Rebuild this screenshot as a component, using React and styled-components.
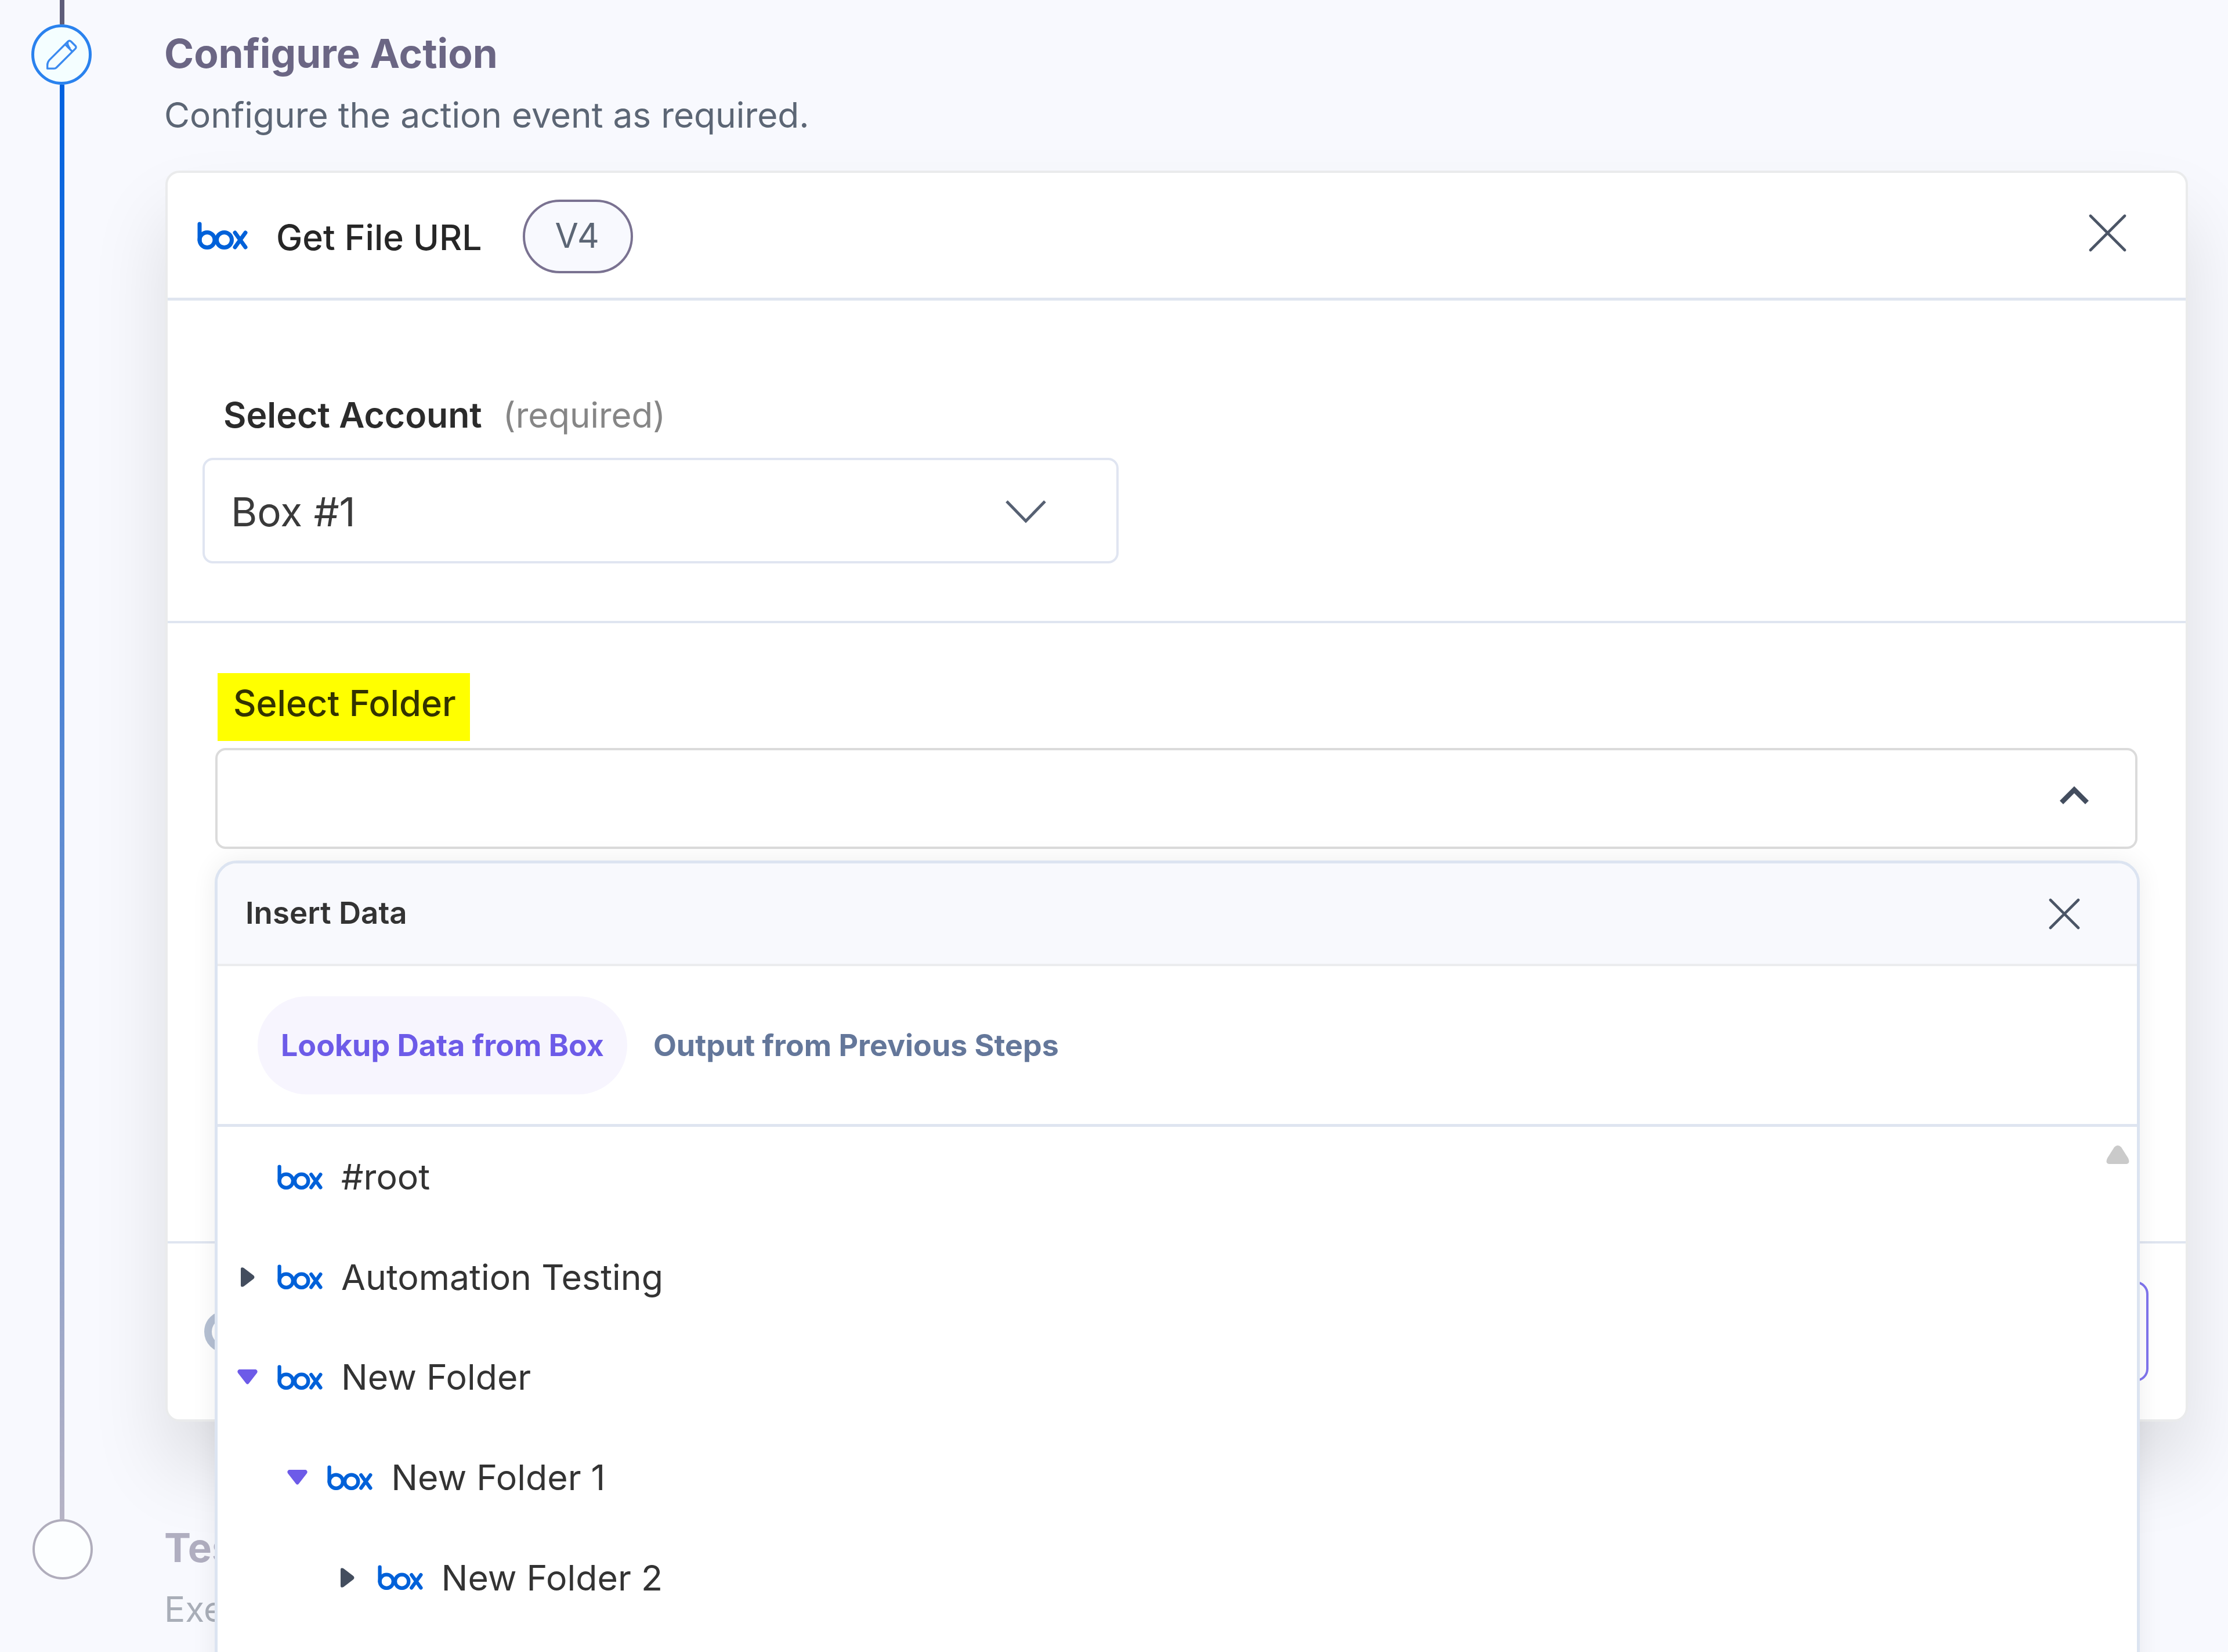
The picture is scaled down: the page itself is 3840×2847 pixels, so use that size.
import React, { useState } from 'react'
import styled, { createGlobalStyle, css } from 'styled-components'

const GlobalStyle = createGlobalStyle`
  * {
    box-sizing: border-box;
  }

  body {
    margin: 0;
    background: #f8f9fe;
    font-family: Inter, "Liberation Sans", sans-serif;
    color: #2b2b2b;
  }
`

const Page = styled.div`
  display: flex;
  align-items: flex-start;
  height: 2847px;
  overflow: hidden;
  background: #f8f9fe;
`

/* ---------- step rail ---------- */

const Rail = styled.div`
  display: flex;
  flex-direction: column;
  align-items: center;
  flex: none;
  width: 106px;
  margin: 0 125px 0 54px;
`

const RailLine = styled.div`
  width: 8px;
  height: ${props => props.$height}px;
  background: ${props => props.$fill};
`

const StepCircle = styled.div`
  display: flex;
  align-items: center;
  justify-content: center;
  width: 104px;
  height: 104px;
  border-radius: 50%;

  ${props => props.$active ? css`
    align-self: flex-start;
    border: 5px solid #2a82ee;
    background: #f4feff;
  ` : css`
    align-self: flex-end;
    border: 4px solid #b0adbc;
    background: #fcfeff;
  `}
`

/* ---------- step text ---------- */

const Steps = styled.div`
  width: 3486px;
  flex: none;
`

const StepHeader = styled.header`
  padding: ${props => props.$muted ? '177px 0 0' : '52px 0 60px'};
  opacity: ${props => props.$muted ? 0.5 : 1};
`

const StepTitle = styled.h2`
  margin: 0 0 30px -2px;
  font-size: 69.2px;
  line-height: 80px;
  font-weight: 700;
  color: #6b6684;
`

const StepText = styled.p`
  margin: 0 0 0 -2px;
  font-size: 60.4px;
  line-height: 72px;
  color: #5c6675;
`

/* ---------- card ---------- */

const Card = styled.section`
  border: 4px solid #eaebec;
  border-radius: 24px;
  background: #fff;
  box-shadow: 0 80px 130px rgba(0, 0, 0, 0.115);
`

const CardHeader = styled.div`
  display: flex;
  align-items: center;
  height: 220px;
  padding: 0 102px 0 51px;
  border-bottom: 5px solid #dfe5f0;
`

const CardTitle = styled.h3`
  margin: 6px 70px 0 49px;
  font-size: 60.7px;
  line-height: 74px;
  font-weight: 500;
  color: #262626;
`

const Version = styled.span`
  display: flex;
  align-items: center;
  justify-content: center;
  width: 190px;
  height: 127px;
  margin-top: 4px;
  padding: 0 2px 4px 0;
  border: 4px solid #7a7291;
  border-radius: 64px;
  background: #f8f9fe;
  font-size: 58.5px;
  color: #5c6675;
`

const IconButton = styled.button`
  display: flex;
  margin: ${props => props.$lift ? `-${props.$lift}px` : 0} 0 0 auto;
  padding: 0;
  border: 0;
  background: none;
  color: #4b5566;
`

const AccountSection = styled.div`
  height: 556px;
  padding: 160px 60px 0;
  border-bottom: 4px solid #dfe5f0;
`

const AccountLabel = styled.label`
  display: flex;
  gap: 36px;
  margin: 0 0 37px 36px;
  font-size: 60.7px;
  line-height: 74px;
  font-weight: 600;
  color: #2b2b2b;
`

const Required = styled.span`
  font-size: 60px;
  font-weight: 400;
  color: #868686;
`

const Select = styled.div`
  display: flex;
  align-items: center;
  justify-content: space-between;
  width: 1579px;
  height: 182px;
  padding: 3px 121px 0 45px;
  border: 4px solid #e0e5f1;
  border-radius: 18px;
  font-size: 69.3px;
  color: #3a3a3a;
`

const FolderSection = styled.div`
  height: 1069px;
  padding: 86px 83px 0 82px;
  border-bottom: 4px solid #dfe5f0;
`

const FolderLabel = styled.label`
  display: block;
  width: 435px;
  margin: 0 0 12px 4px;
  padding: 15px 0 28px 27px;
  background: #ff0;
  font-size: 61.3px;
  line-height: 74px;
  font-weight: 500;
  color: #333300;
  white-space: nowrap;
`

const FolderField = styled.div`
  position: relative;
`

const FolderInput = styled.div`
  display: flex;
  align-items: center;
  justify-content: flex-end;
  height: 174px;
  padding: 0 80px 10px 0;
  border: 4px solid #dbdbdb;
  border-radius: 18px;
  color: #434d5e;
`

const CardFooter = styled.div`
  display: flex;
  align-items: center;
  justify-content: space-between;
  height: 303px;
  padding: 0 64px 0 63px;
`

const FooterButton = styled.button`
  width: 460px;
  height: 173px;
  border: 4px solid #8175ee;
  border-radius: 22px;
  background: #fff;
`

/* ---------- insert data menu ---------- */

const Menu = styled.div`
  position: absolute;
  top: 194px;
  left: -1px;
  z-index: 2;
  width: 3318px;
  height: 1420px;
  border: 5px solid #dce4f1;
  border-radius: 38px 38px 0 0;
  background: #fff;
  box-shadow: 0 0 44px rgba(0, 0, 0, 0.07);
`

const MenuHeader = styled.div`
  display: flex;
  align-items: center;
  height: 177px;
  padding: 0 98px 0 48px;
  border-bottom: 4px solid #ebecee;
  border-radius: 33px 33px 0 0;
  background: #f8f9fd;
`

const MenuTitle = styled.span`
  margin-top: -3px;
  font-size: 52.8px;
  font-weight: 600;
  color: #333;
`

const Tabs = styled.div`
  display: flex;
  align-items: center;
  gap: 5px;
  height: 277px;
  padding: 0 69px;
  border-bottom: 5px solid #dfe5f0;
`

const Tab = styled.button`
  height: 169px;
  padding: 0 40px;
  border: 0;
  border-radius: 85px;
  background: ${props => props.$selected ? '#f7f5fe' : 'none'};
  color: ${props => props.$selected ? '#6d5be8' : '#64779a'};
  font-family: inherit;
  font-size: 51.9px;
  font-weight: 700;
  white-space: nowrap;
`

const Tree = styled.div`
  position: relative;
`

const ScrollArrow = styled.svg`
  position: absolute;
  top: 32px;
  right: 13px;
`

const TreeRow = styled.div`
  display: flex;
  align-items: center;
  height: 172.6px;
  padding-left: ${props => 34 + props.$level * 86.3}px;
  font-size: 60.8px;
  color: #333;
`

const Caret = styled.span`
  display: flex;
  justify-content: center;
  width: 35px;
  margin-right: 34px;
  color: ${props => props.$open ? '#6d5be8' : '#434d5e'};
`

const TreeLabel = styled.span`
  margin-left: 32px;
`

function BoxLogo({ width }) {
  return (
    <svg width={width} viewBox="0 0 87 48" fill="none" stroke="#0061d9" strokeWidth="7" strokeLinecap="round">
      <path d="M4 4V32" />
      <circle cx="17" cy="31.5" r="13" />
      <circle cx="46.5" cy="31.5" r="13" />
      <path d="M65 19L83 44M83 19L65 44" />
    </svg>
  )
}

function PencilIcon() {
  return (
    <svg width="53" height="52" viewBox="145 145 160 156" fill="none" stroke="#3a8af0" strokeWidth="10" strokeLinejoin="round">
      <path d="M150 296V277Q150 264 159 253L257 155Q265 147 273 155L295 177Q303 185 295 193L197 291Q192 296 185 296Z" />
      <path d="M242 170L280 208M256 156Q252 172 268 192" />
    </svg>
  )
}

function CloseIcon({ size }) {
  return (
    <svg width={size} height={size} viewBox={`0 0 ${size} ${size}`} fill="none" stroke="currentColor" strokeWidth="4.6" strokeLinecap="round">
      <path d={`M3 3L${size - 3} ${size - 3}M${size - 3} 3L3 ${size - 3}`} />
    </svg>
  )
}

function CaretIcon({ open }) {
  if (open) {
    return (
      <svg width="35" height="26" viewBox="0 0 35 26" fill="currentColor">
        <path d="M3 0H32Q36 2 34 6L20 24Q17.500 27 15 24L1 6Q-1 2 3 0Z" />
      </svg>
    )
  }
  return (
    <svg width="24" height="34" viewBox="0 0 24 34" fill="currentColor">
      <path d="M0 3Q0 -1 5 1L22 14Q25 17 22 20L5 33Q0 35 0 31Z" />
    </svg>
  )
}

const folders = [
  { name: '#root', level: 0 },
  { name: 'Automation Testing', level: 0, expandable: true },
  { name: 'New Folder', level: 0, expandable: true, open: true },
  { name: 'New Folder 1', level: 1, expandable: true, open: true },
  { name: 'New Folder 2', level: 2, expandable: true }
]

function InsertDataMenu() {
  const [tab, setTab] = useState('lookup')

  return (
    <Menu>
      <MenuHeader>
        <MenuTitle>Insert Data</MenuTitle>
        <IconButton><CloseIcon size={54} /></IconButton>
      </MenuHeader>

      <Tabs>
        <Tab $selected={tab === 'lookup'} onClick={() => setTab('lookup')}>Lookup Data from Box</Tab>
        <Tab $selected={tab === 'output'} onClick={() => setTab('output')}>Output from Previous Steps</Tab>
      </Tabs>

      <Tree>
        <ScrollArrow width="40" height="32" viewBox="0 0 40 32" fill="#cacaca">
          <path d="M14 3Q20 -3 26 3L38 22Q42 31 35 32H5Q-2 31 2 22Z" />
        </ScrollArrow>
        {folders.map(folder => (
          <TreeRow key={folder.name} $level={folder.level}>
            <Caret $open={folder.open}>
              {folder.expandable && <CaretIcon open={folder.open} />}
            </Caret>
            <BoxLogo width={78} />
            <TreeLabel>{folder.name}</TreeLabel>
          </TreeRow>
        ))}
      </Tree>
    </Menu>
  )
}

export default function App() {
  return (
    <Page>
      <GlobalStyle />

      <Rail>
        <RailLine $height={42} $fill="#5f5d7a" />
        <StepCircle $active><PencilIcon /></StepCircle>
        <RailLine $height={2472} $fill="linear-gradient(#0061e0, #b6b3c5)" />
        <StepCircle />
      </Rail>

      <Steps>
        <StepHeader>
          <StepTitle>Configure Action</StepTitle>
          <StepText>Configure the action event as required.</StepText>
        </StepHeader>

        <Card>
          <CardHeader>
            <BoxLogo width={87} />
            <CardTitle>Get File URL</CardTitle>
            <Version>V4</Version>
            <IconButton $lift={9}><CloseIcon size={65} /></IconButton>
          </CardHeader>

          <AccountSection>
            <AccountLabel>
              Select Account
              <Required>(required)</Required>
            </AccountLabel>
            <Select>
              Box #1
              <svg width="70" height="40" viewBox="0 0 70 40" fill="none" stroke="#566072" strokeWidth="5">
                <path d="M2 2L35 36L68 2" />
              </svg>
            </Select>
          </AccountSection>

          <FolderSection>
            <FolderLabel>Select Folder</FolderLabel>
            <FolderField>
              <FolderInput>
                <svg width="50" height="32" viewBox="0 0 50 32" fill="none" stroke="currentColor" strokeWidth="8.500">
                  <path d="M3 28L25 6L47 28" />
                </svg>
              </FolderInput>
              <InsertDataMenu />
            </FolderField>
          </FolderSection>

          <CardFooter>
            <svg width="72" height="72" viewBox="0 0 72 72" fill="none" stroke="#b5c0d3" strokeWidth="13">
              <circle cx="36" cy="36" r="29.500" />
            </svg>
            <FooterButton />
          </CardFooter>
        </Card>

        <StepHeader $muted>
          <StepTitle>Test Action</StepTitle>
          <StepText>Execute this action.</StepText>
        </StepHeader>
      </Steps>
    </Page>
  )
}
